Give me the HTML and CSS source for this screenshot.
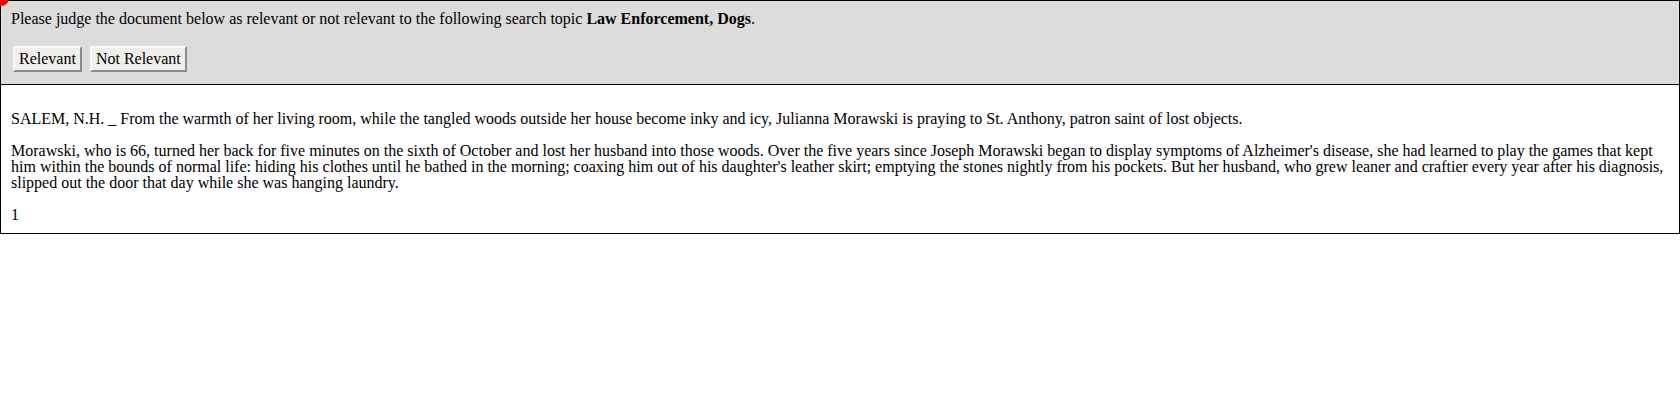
FILE: index.html
```html
<!DOCTYPE html>
<html>
<head>
<meta charset="utf-8">
<title>Relevance judgement</title>
<link rel="stylesheet" href="styles.css">
</head>
<body>
<div class="dot"></div>
<div class="judge">
  <p class="prompt">Please judge the document below as relevant or not relevant to the following search topic <b>Law Enforcement, Dogs</b>.</p>
  <div class="actions">
    <button class="btn" type="button">Relevant</button>
    <button class="btn" type="button">Not Relevant</button>
  </div>
</div>
<div class="doc">
  <p class="para">SALEM, N.H. _ From the warmth of her living room, while the tangled woods outside her house become inky and icy, Julianna Morawski is praying to St. Anthony, patron saint of lost objects.</p>
  <p class="para">Morawski, who is 66, turned her back for five minutes on the sixth of October and lost her husband into those woods. Over the five years since Joseph Morawski began to display symptoms of Alzheimer's disease, she had learned to play the games that kept him within the bounds of normal life: hiding his clothes until he bathed in the morning; coaxing him out of his daughter's leather skirt; emptying the stones nightly from his pockets. But her husband, who grew leaner and craftier every year after his diagnosis, slipped out the door that day while she was hanging laundry.</p>
  <p class="para last">1</p>
</div>
</body>
</html>
```

FILE: styles.css
```css
html, body {
  margin: 0;
  padding: 0;
  background: #fff;
}
body {
  font-family: "Liberation Serif", "Times New Roman", serif;
  font-size: 16px;
  line-height: 16px;
  color: #000;
  position: relative;
}
.dot {
  position: absolute;
  left: -7px;
  top: -10px;
  width: 16px;
  height: 16px;
  border-radius: 50%;
  background: #ff0000;
}
.judge {
  background: #dcdcdc;
  border: 1px solid #000;
  padding: 10px 10px 12px;
}
.prompt {
  margin: 0;
}
.actions {
  display: flex;
  gap: 8px;
  margin-top: 19px;
  padding-left: 2px;
}
.btn {
  font-family: "Liberation Serif", "Times New Roman", serif;
  font-size: 16px;
  color: #000;
  background: #f0eeea;
  border-style: solid;
  border-width: 2px;
  border-top-color: #f8f8f8;
  border-left-color: #f8f8f8;
  border-right-color: #8a8a8a;
  border-bottom-color: #8a8a8a;
  padding: 2px 4px;
  height: 26px;
  line-height: 18px;
  margin: 0;
}
.doc {
  display: flow-root;
  border: 1px solid #000;
  border-top: none;
  padding: 10px;
}
.para {
  margin: 16px 0;
}
.para.last {
  margin-bottom: 0;
}
```
